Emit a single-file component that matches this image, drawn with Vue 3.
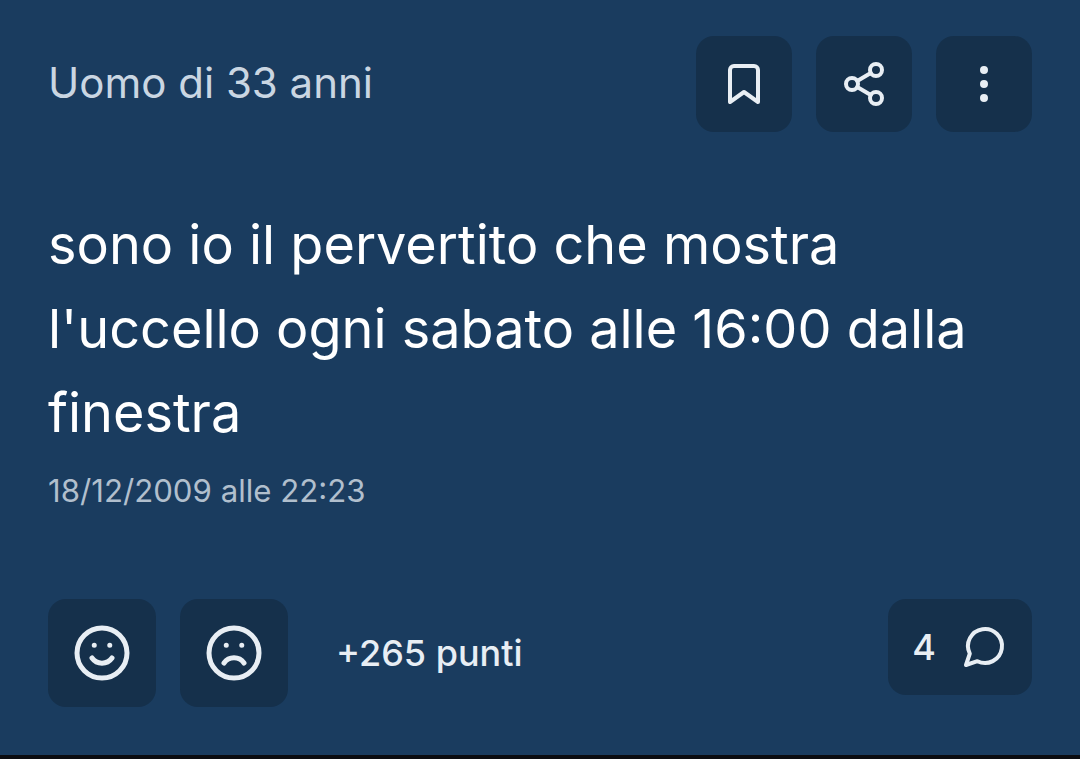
<template>
  <article class="post">
    <header class="post-header">
      <span class="author">{{ post.author }}</span>
      <div class="actions">
        <button class="action-button" type="button" aria-label="Salva">
          <svg class="icon" viewBox="0 0 24 24">
            <path d="M19 21l-7-5-7 5V5a2 2 0 0 1 2-2h10a2 2 0 0 1 2 2z" />
          </svg>
        </button>
        <button class="action-button" type="button" aria-label="Condividi">
          <svg class="icon" viewBox="0 0 24 24">
            <circle cx="18" cy="5" r="3" />
            <circle cx="6" cy="12" r="3" />
            <circle cx="18" cy="19" r="3" />
            <path d="m8.6 13.5 6.8 4M15.4 6.5l-6.8 4" />
          </svg>
        </button>
        <button class="action-button" type="button" aria-label="Altro">
          <svg class="icon" viewBox="0 0 24 24">
            <circle cx="12" cy="12" r="1" />
            <circle cx="12" cy="5" r="1" />
            <circle cx="12" cy="19" r="1" />
          </svg>
        </button>
      </div>
    </header>
    <p class="content">{{ post.text }}</p>
    <time class="date">{{ post.date }}</time>
    <footer class="post-footer">
      <button
        v-for="vote in votes"
        :key="vote.label"
        class="vote-button"
        type="button"
        :aria-label="vote.label"
      >
        <svg class="face" viewBox="0 0 24 24">
          <circle cx="12" cy="12" r="10" />
          <path :d="vote.mouth" />
          <path d="M8.9 8.9h.01M15.1 8.9h.01" />
        </svg>
      </button>
      <span class="points">+{{ post.points }} punti</span>
      <button class="comments-button" type="button" aria-label="Commenti">
        <span>{{ post.comments }}</span>
        <svg class="icon" viewBox="0 0 24 24">
          <path d="m3 21 1.9-5.7a8.5 8.5 0 1 1 3.8 3.8z" />
        </svg>
      </button>
    </footer>
  </article>
</template>

<script setup>
import { ref } from "vue";

const post = ref({
  author: "Uomo di 33 anni",
  text: "sono io il pervertito che mostra l'uccello ogni sabato alle 16:00 dalla finestra",
  date: "18/12/2009 alle 22:23",
  points: 265,
  comments: 4,
});

const votes = [
  { label: "Mi piace", mouth: "M8 14a4.9 4.9 0 0 0 8 0" },
  { label: "Non mi piace", mouth: "M8 16a4.9 4.9 0 0 1 8 0" },
];
</script>

<style>
body {
  background: #1a3c5f;
}
</style>

<style scoped>
.post {
  box-sizing: border-box;
  height: 759px;
  padding: 36px 48px 0;
  border-bottom: 4px solid #0b0c10;
  background: #1a3c5f;
  font-family: Inter, sans-serif;
}

.post-header {
  display: flex;
  align-items: center;
  justify-content: space-between;
}

.author {
  padding-bottom: 3px;
  color: #cad6e2;
  font-size: 42px;
}

.actions {
  display: flex;
  gap: 24px;
}

button {
  display: flex;
  align-items: center;
  justify-content: center;
  padding: 0;
  border: 0;
  border-radius: 18px;
  background: #15304b;
  color: #e8eef4;
  font-family: inherit;
}

svg {
  fill: none;
  stroke: currentColor;
  stroke-width: 2;
  stroke-linecap: round;
  stroke-linejoin: round;
}

.action-button {
  width: 96px;
  height: 96px;
}

.icon {
  width: 48px;
  height: 48px;
}

.content {
  margin: 71px 0 0;
  color: #fff;
  font-size: 54px;
  line-height: 84px;
}

.date {
  display: block;
  margin-top: 12px;
  color: #b1bfcd;
  font-size: 31.2px;
  line-height: 48px;
}

.post-footer {
  display: flex;
  align-items: flex-start;
  gap: 24px;
  margin-top: 84px;
}

.vote-button {
  width: 108px;
  height: 108px;
}

.face {
  width: 60px;
  height: 60px;
}

.points {
  margin-left: 24px;
  color: #e8eef4;
  font-size: 36px;
  font-weight: 500;
  line-height: 108px;
}

.comments-button {
  gap: 24px;
  width: 144px;
  height: 96px;
  margin-left: auto;
  font-size: 36px;
  font-weight: 500;
}
</style>
